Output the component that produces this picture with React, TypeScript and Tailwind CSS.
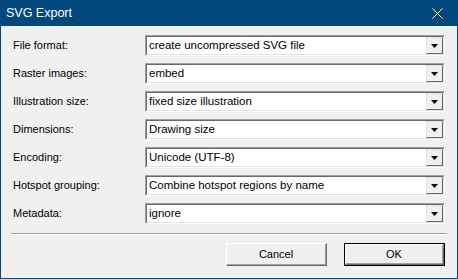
const rows = [
  { label: 'File format:', value: 'create uncompressed SVG file' },
  { label: 'Raster images:', value: 'embed' },
  { label: 'Illustration size:', value: 'fixed size illustration' },
  { label: 'Dimensions:', value: 'Drawing size' },
  { label: 'Encoding:', value: 'Unicode (UTF-8)' },
  { label: 'Hotspot grouping:', value: 'Combine hotspot regions by name' },
  { label: 'Metadata:', value: 'ignore' },
];

function Combo({ value }: { value: string }) {
  return (
    <div className="w-[300px] h-[21px] flex border-t border-l border-[#a0a0a0] border-r border-b border-r-white border-b-white">
      <div className="flex-1 flex border-t border-l border-[#696969] border-r border-b border-r-[#e3e3e3] border-b-[#e3e3e3] bg-white">
        <div className="flex-1 flex items-center pl-[2px] text-[11.5px] text-black leading-none">{value}</div>
        <div className="w-[17px] flex items-center justify-center bg-[#f0f0f0] border-t border-l border-[#e3e3e3] border-r border-b border-r-[#696969] border-b-[#696969]">
          <svg width="7" height="4" viewBox="0 0 7 4">
            <path d="M0 0h7L3.5 4z" fill="#000" />
          </svg>
        </div>
      </div>
    </div>
  );
}

function Btn({ children, def }: { children: string; def?: boolean }) {
  return (
    <div className={`w-[101px] h-[23px] flex ${def ? 'border border-black' : ''}`}>
      <div className="flex-1 flex border-t border-l border-white border-r border-b border-r-[#696969] border-b-[#696969]">
        <div className="flex-1 flex items-center justify-center bg-[#f0f0f0] border-r border-b border-[#a0a0a0] text-[11px] text-black">
          {children}
        </div>
      </div>
    </div>
  );
}

export default function App() {
  return (
    <div className="w-[458px] h-[279px] flex flex-col bg-[#01497c] font-['Liberation_Sans',sans-serif] select-none">
      <div className="h-[26px] flex items-center justify-between pl-[6px] pr-[15px] text-white text-[12.5px]">
        <span>SVG Export</span>
        <svg width="11" height="11" viewBox="0 0 11 11" className="mt-[1px]">
          <path d="M0.5 0.5L10.5 10.5M10.5 0.5L0.5 10.5" stroke="#fff" strokeWidth="1" />
        </svg>
      </div>
      <div className="flex-1 mx-px mb-px bg-[#f0f0f0] flex flex-col pt-[9px]">
        <div className="flex flex-col gap-[7px] pl-[12px] pr-[12px]">
          {rows.map((r) => (
            <div key={r.label} className="flex items-center justify-between h-[21px]">
              <span className="text-[11px] text-black">{r.label}</span>
              <Combo value={r.value} />
            </div>
          ))}
        </div>
        <div className="mx-[10px] mt-[9px] border-t border-[#a0a0a0] border-b border-b-white" />
        <div className="flex justify-end gap-[17px] pr-[12px] mt-[8px]">
          <Btn>Cancel</Btn>
          <Btn def>OK</Btn>
        </div>
      </div>
    </div>
  );
}
